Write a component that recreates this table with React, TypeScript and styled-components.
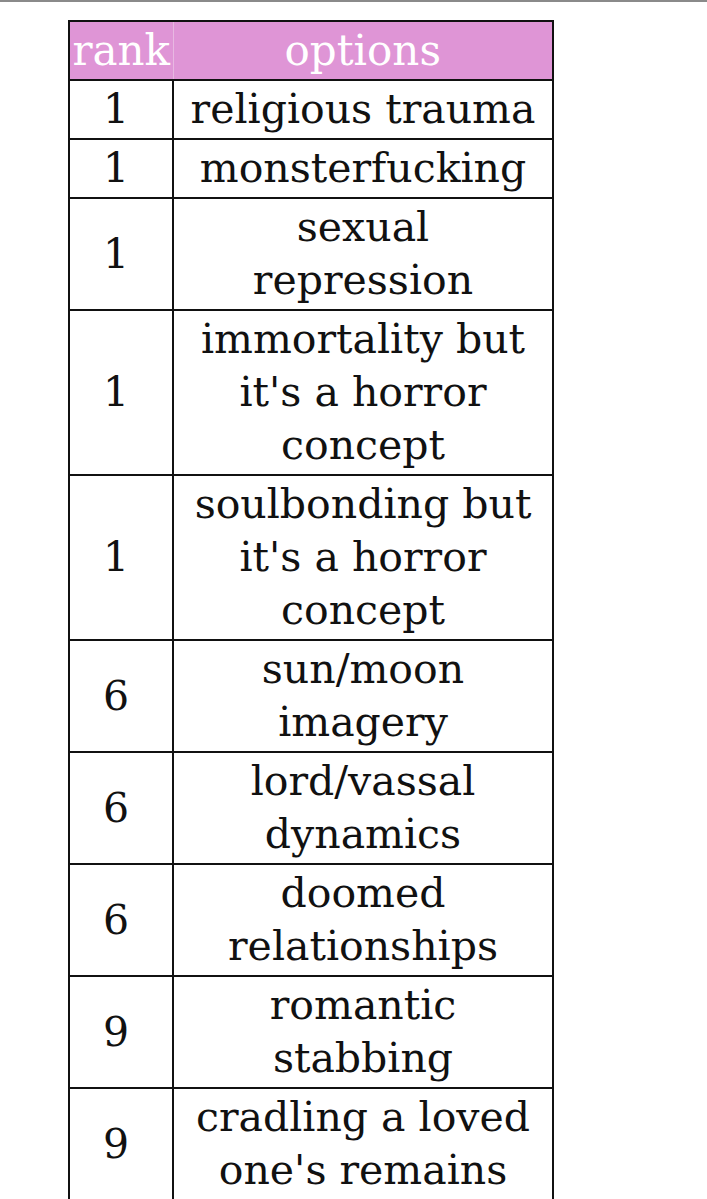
import React from 'react';
import styled, { createGlobalStyle } from 'styled-components';

const GlobalStyle = createGlobalStyle`
  html, body {
    margin: 0;
    padding: 0;
    background: #fff;
    overflow: hidden;
  }
`;

const Page = styled.div`
  width: 707px;
  height: 1199px;
  border-top: 2px solid #8a8a8a;
  box-sizing: border-box;
  padding: 18px 0 0 68px;
  font-family: "DejaVu Serif", "Liberation Serif", serif;
`;

const Table = styled.table`
  width: 486px;
  border-collapse: collapse;
  table-layout: fixed;
  border: 2px solid #111;
`;

const HeadCell = styled.th`
  background: #df95d6;
  color: #fff;
  font-weight: normal;
  font-size: 42px;
  line-height: 57px;
  padding: 0;
  border-left: 1px solid #e8b8e2;
  border-bottom: 2px solid #111;
  &:first-child {
    border-left: none;
  }
`;

const Cell = styled.td<{ $rank?: boolean }>`
  border: 2px solid #111;
  text-align: center;
  color: #111;
  font-size: 41px;
  line-height: 53px;
  padding: 2px ${(p) => (p.$rank ? '10px' : '0')} 2px 0;
`;

const rows: [number, string[]][] = [
  [1, ['religious trauma']],
  [1, ['monsterfucking']],
  [1, ['sexual', 'repression']],
  [1, ['immortality but', "it's a horror", 'concept']],
  [1, ['soulbonding but', "it's a horror", 'concept']],
  [6, ['sun/moon', 'imagery']],
  [6, ['lord/vassal', 'dynamics']],
  [6, ['doomed', 'relationships']],
  [9, ['romantic', 'stabbing']],
  [9, ['cradling a loved', "one's remains"]],
];

export default function App() {
  return (
    <>
      <GlobalStyle />
      <Page>
        <Table>
          <colgroup>
            <col style={{ width: 104 }} />
            <col />
          </colgroup>
          <thead>
            <tr>
              <HeadCell>rank</HeadCell>
              <HeadCell>options</HeadCell>
            </tr>
          </thead>
          <tbody>
            {rows.map(([rank, lines], i) => (
              <tr key={i}>
                <Cell $rank>{rank}</Cell>
                <Cell>
                  {lines.map((l, j) => (
                    <div key={j}>{l}</div>
                  ))}
                </Cell>
              </tr>
            ))}
          </tbody>
        </Table>
      </Page>
    </>
  );
}
